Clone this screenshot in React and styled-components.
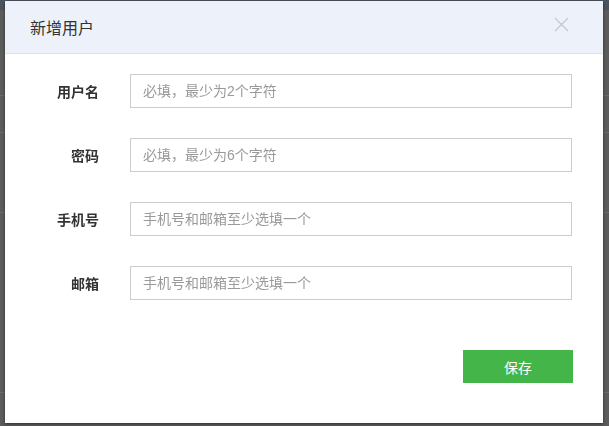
import React from 'react';
import styled, { createGlobalStyle } from 'styled-components';

const GlobalStyle = createGlobalStyle`
  html, body {
    margin: 0;
    padding: 0;
    width: 100%;
    height: 100%;
    overflow: hidden;
    background: #5c5c5c;
    font-family: "Liberation Sans", "Noto Sans CJK SC", sans-serif;
  }
`;

const Page = styled.div`
  width: 609px;
  height: 426px;
  display: flex;
  flex-direction: column;
  background: #5c5c5c;
`;

const PageTop = styled.div`
  height: 10px;
  background: #4b535d;
`;

const PageRow = styled.div`
  height: ${(props) => props.height}px;
  border-bottom: 1px solid #6a6a6a;
`;

const Overlay = styled.div`
  position: fixed;
  top: 1px;
  left: 5px;
  width: 598px;
  height: 422px;
  background: #fff;
  box-shadow: 0 1px 3px rgba(0, 0, 0, 0.5);
  display: flex;
  flex-direction: column;
`;

const Header = styled.div`
  height: 52px;
  padding: 0 34px 0 25px;
  display: flex;
  align-items: center;
  justify-content: space-between;
  background: #edf2fa;
  border-bottom: 1px solid #dde3ec;
`;

const Title = styled.div`
  font-size: 16px;
  color: #333;
`;

const Close = styled.div`
  width: 15px;
  height: 15px;
  margin-bottom: 6px;
  display: flex;
  cursor: pointer;
`;

const Body = styled.div`
  padding: 20px 31px 0 0;
  display: flex;
  flex-direction: column;
  gap: 30px;
`;

const Row = styled.div`
  display: grid;
  grid-template-columns: 94px 1fr;
  column-gap: 31px;
  align-items: center;
`;

const Label = styled.label`
  text-align: right;
  font-size: 14px;
  font-weight: bold;
  color: #333;
`;

const Input = styled.input`
  box-sizing: border-box;
  height: 34px;
  width: 100%;
  padding: 0 12px;
  border: 1px solid #ccc;
  outline: none;
  font-size: 14px;
  font-family: inherit;
  color: #333;

  &::placeholder {
    color: #999;
  }
`;

const Footer = styled.div`
  padding: 50px 30px 0 0;
  display: flex;
  justify-content: flex-end;
`;

const SaveButton = styled.button`
  width: 110px;
  height: 33px;
  border: none;
  background: #44b549;
  color: #fff;
  font-size: 14px;
  font-family: inherit;
  cursor: pointer;
`;

const fields = [
  { label: '用户名', placeholder: '必填，最少为2个字符' },
  { label: '密码', placeholder: '必填，最少为6个字符', type: 'password' },
  { label: '手机号', placeholder: '手机号和邮箱至少选填一个' },
  { label: '邮箱', placeholder: '手机号和邮箱至少选填一个' },
];

export default function App() {
  return (
    <>
      <GlobalStyle />
      <Page>
        <PageTop />
        <PageRow height={85} />
        <PageRow height={36} />
        <PageRow height={79} />
        <PageRow height={179} />
      </Page>
      <Overlay>
        <Header>
          <Title>新增用户</Title>
          <Close>
            <svg width="15" height="15" viewBox="0 0 15 15">
              <path d="M1 1L14 14M14 1L1 14" stroke="#c8c8c8" strokeWidth="1.3" fill="none" />
            </svg>
          </Close>
        </Header>
        <Body>
          {fields.map((f) => (
            <Row key={f.label}>
              <Label>{f.label}</Label>
              <Input type={f.type || 'text'} placeholder={f.placeholder} />
            </Row>
          ))}
        </Body>
        <Footer>
          <SaveButton>保存</SaveButton>
        </Footer>
      </Overlay>
    </>
  );
}
